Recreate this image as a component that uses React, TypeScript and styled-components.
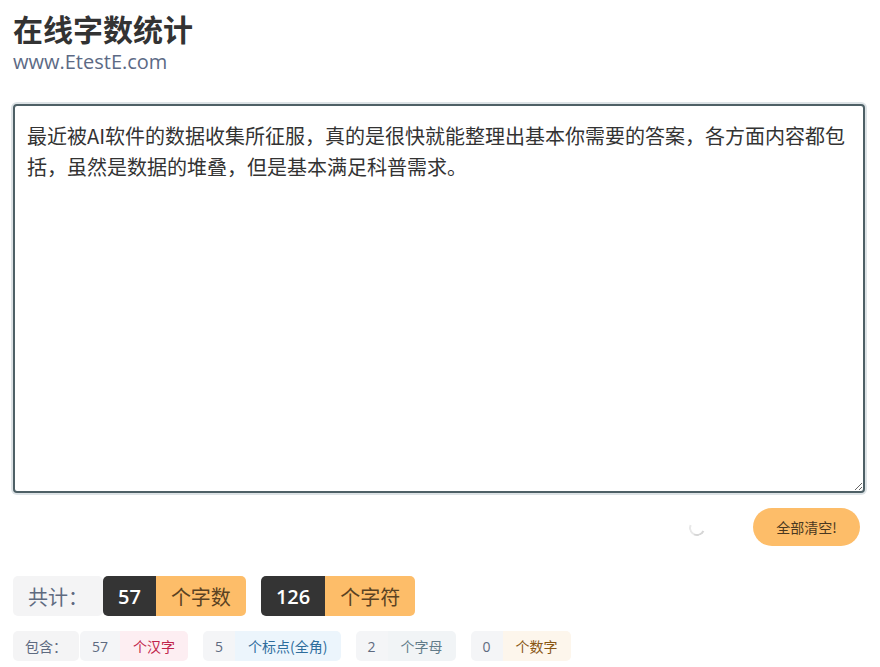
import React, { useState } from "react";
import styled, { createGlobalStyle } from "styled-components";

const GlobalStyle = createGlobalStyle`
  html, body { margin: 0; padding: 0; background: #ffffff; }
  body { font-family: "Open Sans", "Noto Sans CJK SC", sans-serif; }
  * { box-sizing: border-box; }
`;

const Page = styled.div`
  padding: 10px 15px 0 13px;
  display: flex;
  flex-direction: column;
`;

const Title = styled.h1`
  margin: 0;
  font-size: 30px;
  line-height: 36px;
  font-weight: 700;
  color: #333333;
  font-family: "Noto Sans CJK SC", sans-serif;
`;

const Site = styled.div`
  margin-top: 2px;
  font-size: 20px;
  line-height: 28px;
  color: #5c6a85;
  font-family: "Open Sans", sans-serif;
`;

const Editor = styled.textarea`
  margin-top: 28px;
  display: block;
  width: 100%;
  height: 389px;
  padding: 14px 10px 14px 12px;
  border: 2px solid #4e6066;
  border-radius: 4px;
  box-shadow: 0 0 0 2px #dde3e6;
  font-size: 20px;
  line-height: 31px;
  color: #333333;
  font-family: "Noto Sans CJK SC", sans-serif;
  resize: both;
  outline: none;
`;

const ActionRow = styled.div`
  display: flex;
  justify-content: flex-end;
  align-items: center;
  gap: 48px;
  margin-top: 15px;
  padding-right: 5px;
`;

const Spinner = styled.span`
  width: 16px;
  height: 16px;
  border-radius: 50%;
  border: 2px solid transparent;
  border-bottom-color: #d6d6d6;
  border-left-color: #e8e8e8;
  transform: rotate(-20deg);
  margin-top: 2px;
`;

const ClearButton = styled.button`
  height: 38px;
  width: 107px;
  border: none;
  border-radius: 19px;
  background: #fdbd69;
  color: #4a3820;
  font-size: 14px;
  font-family: "Noto Sans CJK SC", sans-serif;
  cursor: pointer;
`;

const TotalRow = styled.div`
  display: flex;
  align-items: center;
  gap: 15px;
  margin-top: 30px;
`;

const TotalLabel = styled.div`
  height: 40px;
  padding: 0 15px;
  display: flex;
  align-items: center;
  background: #f4f4f5;
  border-radius: 5px;
  color: #5e6a80;
  font-size: 20px;
  font-family: "Noto Sans CJK SC", sans-serif;
  margin-right: -15px;
`;

const Badge = styled.div`
  display: flex;
  height: 40px;
  border-radius: 5px;
  overflow: hidden;
`;

const BadgeNum = styled.span`
  display: flex;
  align-items: center;
  padding: 0 15px;
  background: #343434;
  color: #ffffff;
  font-size: 20px;
  font-weight: 600;
  font-family: "Open Sans", sans-serif;
`;

const BadgeText = styled.span`
  display: flex;
  align-items: center;
  padding: 0 15px;
  background: #fdbd69;
  color: #5a4222;
  font-size: 20px;
  font-family: "Noto Sans CJK SC", sans-serif;
`;

const DetailRow = styled.div`
  display: flex;
  align-items: center;
  gap: 15px;
  margin-top: 15px;
`;

const DetailLabel = styled.div`
  height: 30px;
  padding: 0 12px;
  display: flex;
  align-items: center;
  background: #f4f4f5;
  border-radius: 5px;
  color: #5e6a80;
  font-size: 14px;
  font-family: "Noto Sans CJK SC", sans-serif;
  margin-right: -14px;
`;

const Chip = styled.div`
  display: flex;
  height: 30px;
  border-radius: 5px;
  overflow: hidden;
`;

const ChipNum = styled.span`
  display: flex;
  align-items: center;
  padding: 0 12px;
  background: #f4f5f7;
  color: #5e6a80;
  font-size: 14px;
  font-family: "Open Sans", sans-serif;
`;

type Tone = "red" | "blue" | "gray" | "amber";

const toneBg: Record<Tone, string> = {
  red: "#fdeef2",
  blue: "#ecf5fc",
  gray: "#f1f4f6",
  amber: "#fdf6ec",
};

const toneFg: Record<Tone, string> = {
  red: "#c1244b",
  blue: "#2e6d9c",
  gray: "#627c8a",
  amber: "#8a5714",
};

const ChipText = styled.span<{ $tone: Tone }>`
  display: flex;
  align-items: center;
  padding: 0 13px;
  background: ${(p) => toneBg[p.$tone]};
  color: ${(p) => toneFg[p.$tone]};
  font-size: 14px;
  font-family: "Noto Sans CJK SC", sans-serif;
`;

const initialText =
  "最近被AI软件的数据收集所征服，真的是很快就能整理出基本你需要的答案，各方面内容都包括，虽然是数据的堆叠，但是基本满足科普需求。";

export default function App() {
  const [text, setText] = useState(initialText);
  const details: { n: number; label: string; tone: Tone }[] = [
    { n: 57, label: "个汉字", tone: "red" },
    { n: 5, label: "个标点(全角)", tone: "blue" },
    { n: 2, label: "个字母", tone: "gray" },
    { n: 0, label: "个数字", tone: "amber" },
  ];
  return (
    <>
      <GlobalStyle />
      <Page>
        <Title>在线字数统计</Title>
        <Site>www.EtestE.com</Site>
        <Editor value={text} onChange={(e) => setText(e.target.value)} spellCheck={false} />
        <ActionRow>
          <Spinner />
          <ClearButton onClick={() => setText("")}>全部清空!</ClearButton>
        </ActionRow>
        <TotalRow>
          <TotalLabel>共计：</TotalLabel>
          <Badge>
            <BadgeNum>57</BadgeNum>
            <BadgeText>个字数</BadgeText>
          </Badge>
          <Badge>
            <BadgeNum>126</BadgeNum>
            <BadgeText>个字符</BadgeText>
          </Badge>
        </TotalRow>
        <DetailRow>
          <DetailLabel>包含：</DetailLabel>
          {details.map((d) => (
            <Chip key={d.label}>
              <ChipNum>{d.n}</ChipNum>
              <ChipText $tone={d.tone}>{d.label}</ChipText>
            </Chip>
          ))}
        </DetailRow>
      </Page>
    </>
  );
}
